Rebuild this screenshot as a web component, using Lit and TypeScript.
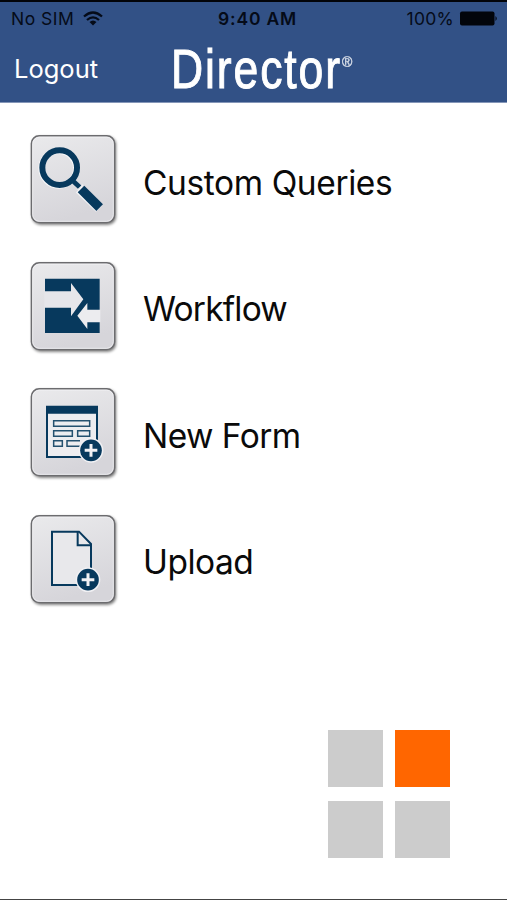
import { LitElement, html, svg, css, SVGTemplateResult } from "lit";
import { customElement } from "lit/decorators.js";

const NAVY = "#07395d";

// Round badge with a plus sign, centred on (cx, cy).
const plusBadge = (cx: number, cy: number) => svg`
  <circle cx=${cx} cy=${cy} r="37" fill="#f1f1f4"/>
  <circle cx=${cx} cy=${cy} r="32.5" fill=${NAVY}/>
  <path d="M${cx - 19} ${cy}h38M${cx} ${cy - 19}v38" stroke="#f1f1f4" stroke-width="9"/>`;

const searchIcon = svg`
  <g fill="none" transform="translate(-3 2)" stroke="#f8f8fa">
    <circle cx="119" cy="128" r="52" stroke-width="18"/>
    <path d="M180 191L240 249" stroke-width="26"/>
  </g>
  <circle cx="119" cy="128" r="52" stroke=${NAVY} stroke-width="18" fill="none"/>
  <path d="M155 164L181 188" stroke=${NAVY} stroke-width="14"/>
  <path d="M173 195L189 179" stroke="#f1f1f4" stroke-width="4"/>
  <path d="M183 192L239 248" stroke=${NAVY} stroke-width="28"/>`;

const workflowIcon = svg`
  <path d="M75 80H239V243H75Z" fill=${NAVY}/>
  <path d="M73 118H153V93L190 142L153 193V167H73Z" fill="#e6e6ea"/>
  <path d="M241 173H202V153L172 191L202 231V211H241Z" fill="#ececef"/>`;

const formIcon = svg`
  <path d="M78 83H234V240H78Z" fill=${NAVY}/>
  <path d="M84 107H228V234H84Z" fill="#ededf0"/>
  <g fill="none" stroke="#24516f" stroke-width="4.5">
    <path d="M101 128H209V145H101ZM101 158H157V175H101ZM173 158H209V175H173ZM101 188H127V205H101ZM180 188H141V205H180"/>
  </g>
  ${plusBadge(213, 217)}`;

const uploadIcon = svg`
  <path d="M96 80H177L213 117V240H96Z" fill="#e8e8eb" stroke=${NAVY} stroke-width="6"/>
  <path d="M173 80V121H213" fill="none" stroke=${NAVY} stroke-width="6"/>
  ${plusBadge(204, 224)}`;

const tile = (icon: SVGTemplateResult) => html`
  <svg class="tile" viewBox="0 0 330 330" aria-hidden="true">
    <defs>
      <linearGradient id="face" x1="0" y1="0" x2="0.3" y2="1">
        <stop offset="0" stop-color="#eaeaec"/>
        <stop offset="1" stop-color="#d6d5da"/>
      </linearGradient>
      <filter id="shade" x="-10%" y="-10%" width="125%" height="125%">
        <feGaussianBlur stdDeviation="4"/>
      </filter>
    </defs>
    <rect x="37" y="35" width="251" height="264" rx="24" fill="#000" opacity=".55" filter="url(#shade)"/>
    <rect x="34.5" y="32.5" width="249" height="260" rx="23" fill="url(#face)" stroke="#6c6c6f" stroke-width="5"/>
    <rect x="38" y="36" width="242" height="253" rx="20" fill="none" stroke="#f4f4f6" stroke-width="2.5"/>
    ${icon}
  </svg>`;

const ITEMS = [
  { label: "Custom Queries", cls: "queries", icon: searchIcon },
  { label: "Workflow", cls: "workflow", icon: workflowIcon },
  { label: "New Form", cls: "form", icon: formIcon },
  { label: "Upload", cls: "upload", icon: uploadIcon },
];

@customElement("app-root")
export class AppRoot extends LitElement {
  static styles = css`
    :host {
      display: flex;
      flex-direction: column;
      box-sizing: border-box;
      height: 900px;
      background: #fff;
      border-bottom: 1px solid #444;
      font-family: Inter, "Liberation Sans", sans-serif;
      color: #0a0a0a;
      overflow: hidden;
    }
    header {
      box-sizing: border-box;
      height: 103px;
      flex: none;
      background: #325186;
      border-top: 2px solid #020409;
      border-bottom: 1px solid #8496b8;
    }
    .status {
      display: grid;
      grid-template-columns: 1fr auto 1fr;
      align-items: center;
      height: 33px;
      padding: 0 9px 0 11px;
      font-size: 17.5px;
      color: #050b18;
    }
    .carrier, .power { display: flex; align-items: center; }
    .carrier { gap: 9px; letter-spacing: 0.5px; }
    .power { justify-content: flex-end; gap: 5px; letter-spacing: 0.25px; }
    .clock { font-weight: 600; letter-spacing: 0.8px; padding-left: 6px; }
    .wifi { width: 20px; height: 15px; }
    .battery { width: 39px; height: 15px; }
    .nav { display: flex; align-items: center; height: 67px; padding-left: 14px; }
    .logout { width: 157px; font-size: 25.5px; color: #fff; }
    .brand { display: flex; font-family: "Liberation Sans", sans-serif; color: #fff; }
    .word {
      width: 171px;
      font-size: 55px;
      line-height: 64px;
      letter-spacing: 2.3px;
      white-space: nowrap;
      transform: scaleX(0.81);
      transform-origin: 0 50%;
      -webkit-text-stroke: 1px #fff;
    }
    .reg { font-size: 14px; line-height: 16px; padding-top: 17px; opacity: 0.8; -webkit-text-stroke: 0.4px #fff; }
    .menu { display: grid; grid-auto-rows: 126.6px; padding: 22px 0 0 20px; }
    .item { display: flex; align-items: flex-start; gap: 13px; }
    .tile { width: 110px; height: 110px; flex: none; }
    .label { font-size: 33.5px; line-height: 40px; padding-top: 37px; white-space: nowrap; }
    .queries { letter-spacing: -0.4px; padding-top: 38px; }
    .workflow { letter-spacing: -0.8px; }
    .form { letter-spacing: -0.55px; padding-top: 38px; }
    .upload { letter-spacing: -0.5px; }
    .mark {
      display: grid;
      grid-template: 57px 57px / 55px 55px;
      gap: 14px 12px;
      margin: auto 57px 41px auto;
    }
    .cell { background: #ccc; }
    .accent { background: #f60; }
  `;

  render() {
    return html`
      <header>
        <div class="status">
          <div class="carrier">
            <span>No SIM</span>
            <svg class="wifi" viewBox="0 0 20 15">
              <g fill="none" stroke="#050b18" stroke-width="2.3">
                <path d="M1 5.5Q10-2.5 19 5.500M4 9Q10 3.700 16 9"/>
              </g>
              <path d="M6.5 11Q10 8 13.5 11L10 14.5Z" fill="#050b18"/>
            </svg>
          </div>
          <span class="clock">9:40 AM</span>
          <div class="power">
            <span>100%</span>
            <svg class="battery" viewBox="0 0 39 15">
              <rect x="1" y="0.5" width="34.5" height="14" rx="2" fill="#02050b"/>
              <path d="M36.5 5Q39 7.5 36.5 10Z" fill="#02050b"/>
            </svg>
          </div>
        </div>
        <div class="nav">
          <span class="logout">Logout</span>
          <div class="brand"><span class="word">Director</span><span class="reg">®</span></div>
        </div>
      </header>
      <nav class="menu">
        ${ITEMS.map((item) => html`
          <div class="item">
            ${tile(item.icon)}
            <span class="label ${item.cls}">${item.label}</span>
          </div>`)}
      </nav>
      <div class="mark">
        <div class="cell"></div><div class="cell accent"></div>
        <div class="cell"></div><div class="cell"></div>
      </div>
    `;
  }
}
